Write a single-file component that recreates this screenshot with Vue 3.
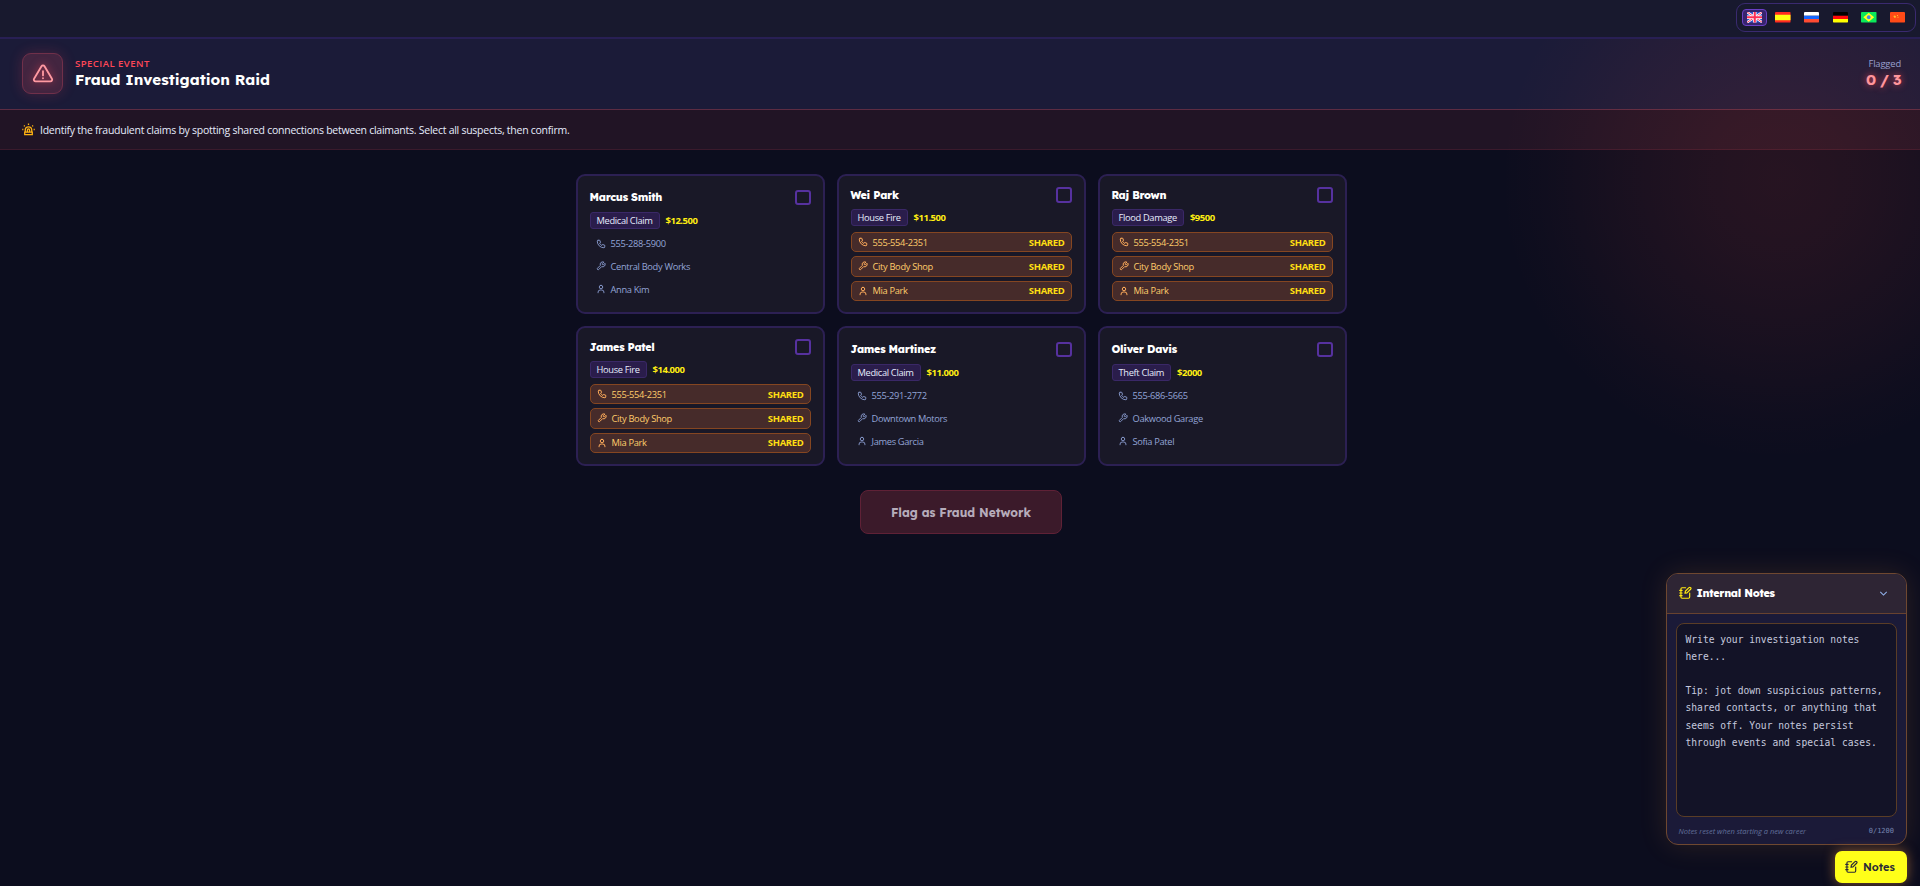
<script setup>
import { ref } from 'vue'

const languages = ['en', 'es', 'ru', 'de', 'br', 'cn']
const locale = ref('en')
const notesOpen = ref(true)
const notes = ref('')
const selected = ref([])

const network = { phone: '555-554-2351', shop: 'City Body Shop', contact: 'Mia Park', shared: true }

const claims = [
  { name: 'Marcus Smith', type: 'Medical Claim', amount: '$12.500', phone: '555-288-5900', shop: 'Central Body Works', contact: 'Anna Kim' },
  { name: 'Wei Park', type: 'House Fire', amount: '$11.500', ...network },
  { name: 'Raj Brown', type: 'Flood Damage', amount: '$9500', ...network },
  { name: 'James Patel', type: 'House Fire', amount: '$14.000', ...network },
  { name: 'James Martinez', type: 'Medical Claim', amount: '$11.000', phone: '555-291-2772', shop: 'Downtown Motors', contact: 'James Garcia' },
  { name: 'Oliver Davis', type: 'Theft Claim', amount: '$2000', phone: '555-686-5665', shop: 'Oakwood Garage', contact: 'Sofia Patel' },
]

const fields = ['phone', 'shop', 'contact']

const placeholder = `Write your investigation notes
here...

Tip: jot down suspicious patterns, shared contacts, or anything that seems off. Your notes persist through events and special cases.`

function toggle(name) {
  selected.value = selected.value.includes(name)
    ? selected.value.filter((item) => item !== name)
    : [...selected.value, name]
}
</script>

<template>
  <div class="game">
    <div class="glow" aria-hidden="true"></div>

    <nav class="topbar">
      <div class="langs">
        <button
          v-for="lang in languages"
          :key="lang"
          class="lang"
          :class="{ 'lang--active': lang === locale }"
          :aria-label="lang"
          @click="locale = lang"
        >
          <svg class="flag" viewBox="0 0 30 20" preserveAspectRatio="none">
            <g v-if="lang === 'en'">
              <path fill="#2b4fc4" d="M0 0h30v20H0z" />
              <path stroke="#fff" stroke-width="4.4" d="M0 0l30 20M30 0L0 20" />
              <path stroke="#ff2f55" stroke-width="1.8" d="M0 0l30 20M30 0L0 20" />
              <path stroke="#fff" stroke-width="7" d="M15 0v20M0 10h30" />
              <path stroke="#ff2f55" stroke-width="4" d="M15 0v20M0 10h30" />
            </g>
            <g v-else-if="lang === 'es'">
              <path fill="#ff2a22" d="M0 0h30v20H0z" />
              <path fill="#ffff12" d="M0 5h30v10.500H0z" />
            </g>
            <g v-else-if="lang === 'ru'">
              <path fill="#fff" d="M0 0h30v7H0z" />
              <path fill="#1565ff" d="M0 7h30v6.500H0z" />
              <path fill="#ff4b32" d="M0 13.500h30V20H0z" />
            </g>
            <g v-else-if="lang === 'de'">
              <path fill="#000" d="M0 0h30v7H0z" />
              <path fill="#ff0a0a" d="M0 7h30v6.500H0z" />
              <path fill="#ffff00" d="M0 13.500h30V20H0z" />
            </g>
            <g v-else-if="lang === 'br'">
              <path fill="#0be85a" d="M0 0h30v20H0z" />
              <path fill="#ffff20" d="M15 1.500L25.500 10 15 18.500 4.500 10z" />
              <circle cx="15" cy="10" r="3.600" fill="#3d8ae6" />
            </g>
            <g v-else>
              <path fill="#ff4a17" d="M0 0h30v20H0z" />
              <path fill="#ffc02a" d="M8 6l1.500 1.500L12 7l-1 2 1 2-2-.500L8 11.500V9.500L6.500 8.500zM13.500 5.500h2v2h-2zM14.500 9h2v2h-2z" />
            </g>
          </svg>
        </button>
      </div>
    </nav>

    <header class="header">
      <div class="alert">
        <svg class="alert__icon" viewBox="0 0 24 24">
          <path d="M10.360 3.600 2.260 17.100a1.910 1.910 0 0 0 1.640 2.900h16.200a1.910 1.910 0 0 0 1.640-2.900L13.640 3.600a1.910 1.910 0 0 0-3.280 0zM12 9v4.500M12 16.500v.200" />
        </svg>
      </div>
      <div class="heading">
        <span class="heading__tag">SPECIAL EVENT</span>
        <h1 class="heading__title">Fraud Investigation Raid</h1>
      </div>
      <div class="counter">
        <span class="counter__label">Flagged</span>
        <span class="counter__value">{{ selected.length }} / 3</span>
      </div>
    </header>

    <section class="brief">
      <svg class="brief__icon" viewBox="0 0 24 24">
        <path d="M6 17v-4a6 6 0 0 1 12 0v4M5 17h14v4.500H5zM12 1v2.500M3.500 4.500l1.700 1.700M20.500 4.500l-1.700 1.700M.500 12H2.500M21.500 12h2M10 17v-4a2 2 0 0 1 4 0v4" />
      </svg>
      <p class="brief__text">Identify the fraudulent claims by spotting shared connections between claimants. Select all suspects, then confirm.</p>
    </section>

    <main class="board">
      <div class="grid">
        <article v-for="claim in claims" :key="claim.name" class="card" @click="toggle(claim.name)">
          <div class="card__top">
            <h2 class="card__name">{{ claim.name }}</h2>
            <span class="check" :class="{ 'check--on': selected.includes(claim.name) }"></span>
          </div>
          <div class="card__meta">
            <span class="badge">{{ claim.type }}</span>
            <span class="amount">{{ claim.amount }}</span>
          </div>
          <ul class="links">
            <li v-for="field in fields" :key="field" class="link" :class="{ 'link--shared': claim.shared }">
              <svg class="link__icon" viewBox="0 0 24 24">
                <path v-if="field === 'phone'" d="M5 3h4l2 5.500-2.500 1.500a11 11 0 0 0 5.500 5.500l1.500-2.500 5.500 2v4a2 2 0 0 1-2 2A16 16 0 0 1 3 5a2 2 0 0 1 2-2" />
                <path v-else-if="field === 'shop'" d="M14.700 6.300a1 1 0 0 0 0 1.400l1.600 1.600a1 1 0 0 0 1.400 0l3.770-3.770a6 6 0 0 1-7.940 7.940l-6.910 6.910a2.120 2.120 0 0 1-3-3l6.910-6.910a6 6 0 0 1 7.940-7.940z" />
                <path v-else d="M12 3a4.200 4.200 0 1 0 0 8.400A4.200 4.200 0 0 0 12 3M5 21v-1.500a5 5 0 0 1 5-5h4a5 5 0 0 1 5 5V21" />
              </svg>
              <span class="link__text">{{ claim[field] }}</span>
              <span v-if="claim.shared" class="link__tag">SHARED</span>
            </li>
          </ul>
        </article>
      </div>

      <button class="submit" :disabled="selected.length < 3">Flag as Fraud Network</button>
    </main>

    <aside class="dock">
      <section v-if="notesOpen" class="notes">
        <header class="notes__head">
          <svg class="notes__icon" viewBox="0 0 24 24">
            <path d="M13 3H7a2 2 0 0 0-2 2v14a2 2 0 0 0 2 2h11a2 2 0 0 0 2-2v-7M3 7.500h4M3 12h4M3 16.500h4M12 12.500l.600-3.500 6.200-6.200a1.900 1.900 0 0 1 2.800 2.800L15.400 11.800z" />
          </svg>
          <h3 class="notes__title">Internal Notes</h3>
          <svg class="notes__chevron" viewBox="0 0 24 24" @click="notesOpen = false">
            <path d="M5 8.500l7 7 7-7" />
          </svg>
        </header>
        <div class="notes__body">
          <textarea v-model="notes" class="notes__input" maxlength="1200" spellcheck="false" :placeholder="placeholder"></textarea>
          <footer class="notes__foot">
            <span class="notes__hint">Notes reset when starting a new career</span>
            <span class="notes__count">{{ notes.length }}/1200</span>
          </footer>
        </div>
      </section>
      <button class="toggle" @click="notesOpen = !notesOpen">
        <svg class="toggle__icon" viewBox="0 0 24 24">
          <path d="M13 3H7a2 2 0 0 0-2 2v14a2 2 0 0 0 2 2h11a2 2 0 0 0 2-2v-7M3 7.500h4M3 12h4M3 16.500h4M12 12.500l.600-3.500 6.200-6.200a1.900 1.900 0 0 1 2.800 2.800L15.400 11.800z" />
        </svg>
        Notes
      </button>
    </aside>
  </div>
</template>

<style>
body {
  margin: 0;
  background: #0c0d1e;
}
</style>

<style scoped>
.game {
  --display: Lexend, 'Noto Sans', sans-serif;
  --body: 'Segoe UI', 'Open Sans', sans-serif;
  position: relative;
  display: flex;
  flex-direction: column;
  height: 100vh;
  overflow: hidden;
  color: #fff;
  background: #0c0d1e;
  font-family: var(--body);
}

.game *,
.game *::before {
  box-sizing: border-box;
}

h1,
h2,
h3,
p,
ul {
  margin: 0;
  padding: 0;
}

button {
  font: inherit;
  color: inherit;
  cursor: pointer;
}

svg {
  flex: none;
  fill: none;
}

/* Red haze in the corner, painted over the header and the brief */
.glow {
  position: absolute;
  z-index: 1;
  top: -100px;
  left: 1500px;
  width: 560px;
  height: 560px;
  background: radial-gradient(closest-side, rgba(255, 75, 60, 0.11) 0%, rgba(255, 75, 60, 0.095) 25%, rgba(255, 75, 60, 0.05) 60%, rgba(255, 75, 60, 0.015) 85%, transparent 100%);
  pointer-events: none;
}

.topbar {
  position: relative;
  z-index: 2;
  display: flex;
  flex: none;
  align-items: center;
  justify-content: flex-end;
  height: 39px;
  padding: 0 4px 2px 0;
  background: #18192e;
  border-bottom: 2px solid #281f54;
}

.langs {
  display: flex;
  gap: 3.6px;
  height: 29px;
  padding: 5px;
  border: 1px solid #3a2a70;
  border-radius: 9px;
}

.lang {
  display: flex;
  align-items: center;
  justify-content: center;
  width: 25px;
  height: 17px;
  padding: 0;
  background: none;
  border: 1px solid transparent;
  border-radius: 4px;
}

.lang--active {
  background: #37246e;
  border-color: #6b3fc4;
}

.flag {
  width: 15.5px;
  height: 10.5px;
  border-radius: 1px;
}

.header {
  display: flex;
  flex: none;
  align-items: center;
  height: 71px;
  padding: 0 19px 1px 22px;
  background: #1b1b38;
  border-bottom: 1px solid #5c2c42;
}

.alert {
  display: flex;
  align-items: center;
  justify-content: center;
  width: 41px;
  height: 41px;
  background: #432540;
  border: 1px solid #70304a;
  border-radius: 9px;
  box-shadow: 0 0 14px rgba(255, 71, 87, 0.2);
}

.alert__icon {
  width: 22px;
  height: 22px;
  stroke: #ff9aa2;
  stroke-width: 2;
  stroke-linecap: round;
  stroke-linejoin: round;
  filter: drop-shadow(0 0 4px rgba(255, 71, 87, 0.7));
}

.heading {
  display: flex;
  flex-direction: column;
  margin: -1px 0 0 12px;
}

.heading__tag {
  color: #ff4757;
  font-size: 9.6px;
  font-weight: 600;
  line-height: 13px;
  letter-spacing: 0.43px;
}

.heading__title {
  font-family: var(--display);
  font-size: 15.2px;
  font-weight: 700;
  line-height: 19px;
}

.counter {
  display: flex;
  flex-direction: column;
  align-items: flex-end;
  margin: -1px 0 0 auto;
}

.counter__label {
  color: #93a4d6;
  font-size: 9.4px;
  line-height: 13px;
  letter-spacing: -0.15px;
}

.counter__value {
  color: #ff9aa2;
  font-family: var(--display);
  font-size: 15px;
  font-weight: 700;
  line-height: 19px;
  letter-spacing: -0.5px;
  text-shadow: 0 0 7px rgba(255, 71, 87, 0.8);
}

.brief {
  display: flex;
  flex: none;
  align-items: center;
  gap: 5px;
  height: 40px;
  padding: 0 22px;
  background: #211425;
  border-bottom: 1px solid #3a1a2c;
}

.brief__icon {
  width: 13px;
  height: 13px;
  stroke: #ffb312;
  stroke-width: 2.4;
}

.brief__text {
  color: #e6ecfc;
  font-size: 10.5px;
  letter-spacing: -0.26px;
  white-space: nowrap;
}

.board {
  display: flex;
  flex-direction: column;
  align-items: center;
  gap: 24px;
  padding: 24px 0 0 2px;
}

.grid {
  display: grid;
  grid-template-columns: repeat(3, 1fr);
  grid-auto-rows: 140px;
  gap: 12px;
  width: 771px;
}

.card {
  display: flex;
  flex-direction: column;
  justify-content: center;
  padding: 0 12px;
  background: #191827;
  border: 2px solid #2c2053;
  border-radius: 9px;
  cursor: pointer;
}

.card__top {
  display: flex;
  align-items: center;
  justify-content: space-between;
}

.card__name {
  font-family: var(--display);
  font-size: 10.8px;
  font-weight: 800;
  line-height: 15px;
  letter-spacing: -0.32px;
}

.check {
  width: 15.5px;
  height: 15.5px;
  border: 2px solid #56319f;
  border-radius: 3px;
}

.check--on {
  background: #ff4757;
  border-color: #ff4757;
}

.card__meta {
  display: flex;
  align-items: center;
  gap: 6px;
  margin-top: 6.4px;
}

.badge {
  height: 17px;
  padding: 0 6px;
  color: #e6ecfc;
  font-size: 9.3px;
  line-height: 15px;
  letter-spacing: -0.33px;
  background: #2a1d4b;
  border: 1px solid #3a2867;
  border-radius: 3px;
}

.amount {
  color: #ffee12;
  font-size: 9.5px;
  font-weight: 700;
  letter-spacing: -0.5px;
}

.links {
  display: flex;
  flex-direction: column;
  gap: 4px;
  margin-top: 6px;
  list-style: none;
}

.link {
  display: flex;
  align-items: center;
  height: 18.6px;
  padding: 0 6px;
  color: #93a4d6;
  font-size: 9.3px;
  letter-spacing: -0.33px;
}

.link--shared {
  height: 20.2px;
  color: #ffcb6b;
  background: #462b2a;
  border: 1px solid #854621;
  border-radius: 5px;
}

.link__icon {
  width: 10px;
  height: 10px;
  margin-right: 5px;
  stroke: #8293c4;
  stroke-width: 2.4;
  stroke-linecap: round;
  stroke-linejoin: round;
}

.link--shared .link__icon {
  stroke: #ffad5c;
}

.link__tag {
  margin-left: auto;
  color: #ffdf12;
  font-size: 9.5px;
  font-weight: 700;
}

.submit {
  width: 202px;
  height: 44px;
  padding: 0;
  color: #b6acba;
  font-family: var(--display);
  font-size: 12px;
  font-weight: 700;
  background: #3b1a2a;
  border: 1px solid #5f2136;
  border-radius: 8px;
}

/* Notes float over the page in the bottom corner */
.dock {
  position: absolute;
  z-index: 3;
  right: 13px;
  bottom: 3.5px;
  display: flex;
  flex-direction: column;
  align-items: flex-end;
  gap: 6px;
}

.notes {
  width: 241.5px;
  height: 272px;
  overflow: hidden;
  background: #1b1a38;
  border: 1px solid #6f4830;
  border-radius: 12px;
  box-shadow: 0 0 28px rgba(255, 159, 67, 0.13);
}

.notes__head {
  display: flex;
  align-items: center;
  height: 40px;
  padding: 0 17px 0 11px;
  background: #2e2534;
  border-bottom: 1px solid #68422f;
}

.notes__icon,
.toggle__icon {
  width: 14px;
  height: 14px;
  stroke: #ffe912;
  stroke-width: 2;
  stroke-linecap: round;
  stroke-linejoin: round;
}

.notes__title {
  margin-left: 5px;
  font-family: var(--display);
  font-size: 10.8px;
  font-weight: 800;
  letter-spacing: -0.32px;
}

.notes__chevron {
  width: 11px;
  height: 11px;
  margin-left: auto;
  stroke: #93b4ee;
  stroke-width: 2.2;
  cursor: pointer;
}

.notes__body {
  display: flex;
  flex-direction: column;
  padding: 9px 9px 0;
}

.notes__input {
  display: block;
  height: 194px;
  padding: 7px 7px 7px 9px;
  color: #fff;
  font-family: 'DejaVu Sans Mono', monospace;
  font-size: 9.65px;
  line-height: 17.2px;
  background: #131327;
  border: 1px solid #5a3d26;
  border-radius: 8px;
  outline: none;
  resize: none;
}

.notes__input::placeholder {
  color: #c6c9de;
  opacity: 1;
}

.notes__foot {
  display: flex;
  align-items: center;
  justify-content: space-between;
  height: 28px;
  padding: 0 3px;
  color: #62709a;
  font-size: 7.5px;
}

.notes__hint {
  font-style: italic;
  letter-spacing: -0.03px;
}

.notes__count {
  color: #7685b0;
  font-family: 'DejaVu Sans Mono', monospace;
  font-size: 7px;
}

.toggle {
  display: flex;
  align-items: center;
  justify-content: center;
  gap: 5px;
  width: 72px;
  height: 32px;
  padding: 0 3px 0 0;
  color: #2a2937;
  font-family: var(--display);
  font-size: 11px;
  font-weight: 600;
  background: #ffff19;
  border: 0;
  border-radius: 7px;
  box-shadow: 0 0 12px rgba(255, 159, 67, 0.5);
}

.toggle__icon {
  stroke: #2a2937;
}
</style>
